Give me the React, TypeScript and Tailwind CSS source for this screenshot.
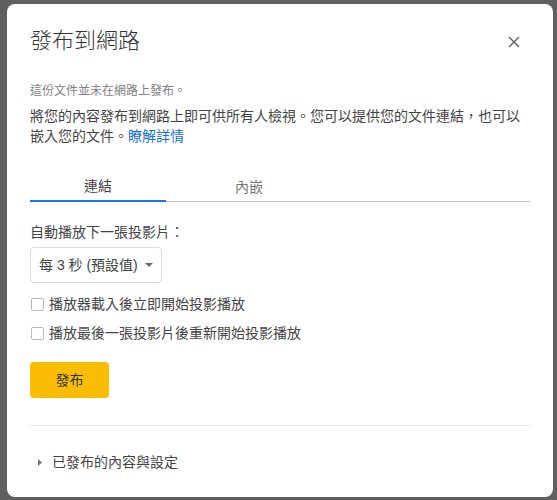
import { useState } from 'react'

function CloseIcon() {
  return (
    <svg width="12" height="12" viewBox="0 0 12 12" fill="none" stroke="currentColor" strokeWidth="1.5">
      <path d="M1 1l10 10M11 1L1 11" />
    </svg>
  )
}

function Checkbox({ label }: { label: string }) {
  const [checked, setChecked] = useState(false)
  return (
    <label className="flex h-[20px] items-center">
      <span
        onClick={() => setChecked(!checked)}
        className="ml-[1px] h-[13px] w-[13px] shrink-0 rounded-[2px] border border-[#b8b8b8] bg-white"
      />
      <span className="ml-[5px] text-[14px] leading-[20px] text-[#444]">{label}</span>
    </label>
  )
}

export default function App() {
  const [tab, setTab] = useState<'link' | 'embed'>('link')

  return (
    <div className="h-[500px] w-full overflow-hidden bg-[#606060] pl-[7px] pt-[4px] font-['Liberation_Sans','Noto_Sans_CJK_TC',sans-serif]">
      <div className="flex h-[493px] w-[546px] flex-col rounded-[8px] bg-white px-[23px] pt-[23px]">
        {/* header */}
        <div className="flex h-[28px] items-center justify-between">
          <h1 className="text-[22px] font-light leading-[28px] text-[#333]">發布到網路</h1>
          <button className="mr-[4px] mt-[2px] flex h-[24px] w-[24px] items-center justify-center text-[#666]">
            <CloseIcon />
          </button>
        </div>

        <p className="mt-[28px] text-[12px] leading-[16px] text-[#808080]">這份文件並未在網路上發布。</p>
        <p className="mt-[7px] text-[14px] leading-[20px] text-[#444]">
          將您的內容發布到網路上即可供所有人檢視。您可以提供您的文件連結，也可以嵌入您的文件。
          <a className="text-[#1a6fd8]">瞭解詳情</a>
        </p>

        {/* tabs */}
        <div className="mt-[27px] flex h-[29px]">
          <button
            onClick={() => setTab('link')}
            className={
              tab === 'link'
                ? 'flex w-[136px] items-center justify-center border-b-2 border-[#1a73e8] text-[14px] text-[#444]'
                : 'flex w-[136px] items-center justify-center border-b border-[#c4c4c4] text-[14px] text-[#777]'
            }
          >
            連結
          </button>
          <div className="flex flex-1 border-b border-[#c4c4c4]">
            <button
              onClick={() => setTab('embed')}
              className="flex w-[166px] items-center justify-center text-[14px] text-[#777]"
            >
              內嵌
            </button>
          </div>
        </div>

        <p className="mt-[20px] text-[14px] leading-[20px] text-[#444]">自動播放下一張投影片：</p>

        <div className="mt-[5px] flex h-[36px] w-[132px] items-center rounded-[4px] border border-[#dadce0] pl-[8px]">
          <span className="text-[14px] leading-[20px] text-[#444]">每 3 秒 (預設值)</span>
          <svg className="ml-[7px]" width="8" height="4" viewBox="0 0 8 4">
            <path d="M0 0h8L4 4z" fill="#666" />
          </svg>
        </div>

        <div className="mt-[11px]">
          <Checkbox label="播放器載入後立即開始投影播放" />
        </div>
        <div className="mt-[9px]">
          <Checkbox label="播放最後一張投影片後重新開始投影播放" />
        </div>

        <button className="mt-[19px] flex h-[36px] w-[79px] items-center justify-center rounded-[4px] bg-[#fbbc04] text-[14px] text-[#333]">
          發布
        </button>

        <div className="mt-[27px] h-px w-full bg-[#e3e3e3]" />

        <div className="mt-[26px] flex h-[20px] items-center">
          <svg className="ml-[8px]" width="4" height="7" viewBox="0 0 4 7">
            <path d="M0 0l4 3.5L0 7z" fill="#777" />
          </svg>
          <span className="ml-[10px] text-[14px] leading-[20px] text-[#444]">已發布的內容與設定</span>
        </div>
      </div>
    </div>
  )
}
